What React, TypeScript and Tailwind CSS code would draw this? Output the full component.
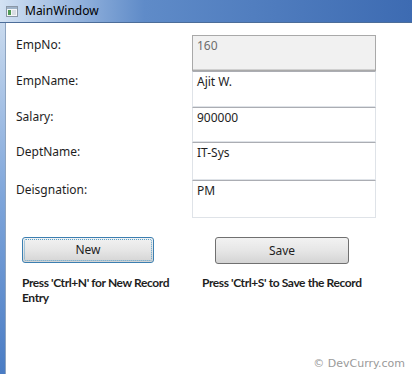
import React from 'react';

const fields = [
  { label: 'EmpNo:', value: '160', h: 'h-[36px]', readOnly: true },
  { label: 'EmpName:', value: 'Ajit W.', h: 'h-[36px]' },
  { label: 'Salary:', value: '900000', h: 'h-[35px]' },
  { label: 'DeptName:', value: 'IT-Sys', h: 'h-[38px]' },
  { label: 'Deisgnation:', value: 'PM', h: 'h-[38px]' },
];

const WindowIcon = () => (
  <svg width="12" height="11" viewBox="0 0 12 11">
    <rect x="0.5" y="0.5" width="11" height="10" fill="#f4f6f8" stroke="#8a97a6" />
    <rect x="1" y="1" width="10" height="2" fill="#9fb3c8" />
    <rect x="2" y="4" width="3" height="5" fill="#4f9a55" />
    <rect x="6" y="4" width="4" height="5" fill="#d8dde3" />
  </svg>
);

export default function App() {
  return (
    <div
      className="relative w-[412px] h-[374px] overflow-hidden bg-white text-[12px] text-[#1e1e1e]"
      style={{ fontFamily: '"Noto Sans", "Open Sans", sans-serif' }}
    >
      {/* title bar */}
      <div className="h-[23px] flex items-center gap-[7px] pl-[6px] bg-gradient-to-r from-[#d3e2f3] via-[#5f8bc8] via-35% to-[#3d6bb2] border-b border-[#4c6d99]">
        <WindowIcon />
        <span className="text-[12px] text-black leading-none">MainWindow</span>
      </div>

      <div className="flex h-[351px]">
        {/* left frame */}
        <div className="w-[6px] bg-gradient-to-b from-[#c9daee] via-[#7ea5da] to-[#4a7cc4] border-r border-[#8ea4c0]" />

        <div className="flex-1 flex flex-col bg-white">
          {/* fields */}
          <div className="pt-[12px] pl-[10px] flex flex-col">
            {fields.map((f) => (
              <div key={f.label} className="flex">
                <div className="w-[176px] pt-[1px]">{f.label}</div>
                <div
                  className={`w-[184px] ${f.h} px-[4px] pt-[1px] border ${
                    f.readOnly
                      ? 'bg-[#f1f1f1] border-[#a9a9a9] text-[#6d6d6d] shadow-[inset_0_-1px_0_#d0d0d0]'
                      : 'bg-white border-[#dfe3e8] border-t-[#abadb3]'
                  }`}
                >
                  {f.value}
                </div>
              </div>
            ))}
          </div>

          {/* buttons */}
          <div className="flex mt-[19px] pl-[16px]">
            <div className="w-[180px] flex flex-col">
              <button className="w-[132px] h-[26px] rounded-[3px] border border-[#3c7fb1] bg-gradient-to-b from-[#f2f2f2] via-[#e6e6e6] to-[#d4d4d4] p-[1px]">
                <div className="w-full h-full border border-dotted border-[#5aa0c8] rounded-[2px] flex items-center justify-center">
                  New
                </div>
              </button>
              <p
                className="mt-[12px] font-bold leading-[15px] w-[160px] text-[12px] tracking-[-0.4px]"
                style={{ fontFamily: 'Lato, sans-serif' }}
              >
                Press 'Ctrl+N' for New Record Entry
              </p>
            </div>
            <div className="flex flex-col">
              <button className="ml-[13px] w-[134px] h-[27px] rounded-[3px] border border-[#707070] bg-gradient-to-b from-[#f2f2f2] via-[#e6e6e6] to-[#d4d4d4] flex items-center justify-center">
                Save
              </button>
              <p
                className="mt-[11px] font-bold leading-[15px] text-[12px] tracking-[-0.4px]"
                style={{ fontFamily: 'Lato, sans-serif' }}
              >
                Press 'Ctrl+S' to Save the Record
              </p>
            </div>
          </div>
        </div>
      </div>

      {/* watermark */}
      <div
        className="absolute right-[7px] bottom-[2px] text-[11px] text-[#9a9a9a]"
        style={{ fontFamily: '"DejaVu Sans", sans-serif' }}
      >
        © DevCurry.com
      </div>
    </div>
  );
}
